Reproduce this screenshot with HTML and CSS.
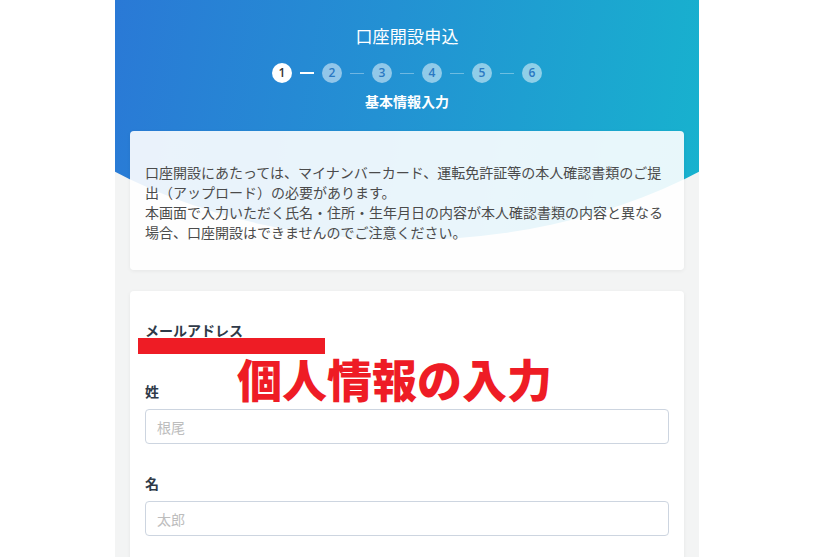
FILE: index.html
```html
<!DOCTYPE html>
<html lang="ja">
<head>
<meta charset="utf-8">
<title>口座開設申込</title>
<link rel="stylesheet" href="styles.css">
</head>
<body>
<div class="page">
  <header class="hero">
    <h1 class="title">口座開設申込</h1>
    <ol class="steps">
      <li class="step active">1</li>
      <li class="bar active"></li>
      <li class="step">2</li>
      <li class="bar"></li>
      <li class="step">3</li>
      <li class="bar"></li>
      <li class="step">4</li>
      <li class="bar"></li>
      <li class="step">5</li>
      <li class="bar"></li>
      <li class="step">6</li>
    </ol>
    <p class="step-name">基本情報入力</p>
  </header>

  <section class="card notice">
    <p>口座開設にあたっては、マイナンバーカード、運転免許証等の本人確認書類のご提出（アップロード）の必要があります。<br>本画面で入力いただく氏名・住所・生年月日の内容が本人確認書類の内容と異なる場合、口座開設はできませんのでご注意ください。</p>
  </section>

  <section class="card form">
    <div class="field email">
      <div class="label">メールアドレス</div>
      <div class="value"><span class="redact"></span></div>
    </div>
    <div class="field">
      <label class="label" for="sei">姓</label>
      <input class="input" id="sei" type="text" placeholder="根尾">
    </div>
    <div class="field">
      <label class="label" for="mei">名</label>
      <input class="input" id="mei" type="text" placeholder="太郎">
    </div>
    <div class="annotation">個人情報の入力</div>
  </section>
</div>
</body>
</html>
```

FILE: styles.css
```css
* { box-sizing: border-box; }
html, body { margin: 0; padding: 0; }
body {
  background: #ffffff;
  font-family: "Noto Sans CJK JP", "Noto Sans", sans-serif;
  height: 557px;
  overflow: hidden;
}
.page {
  position: relative;
  width: 584px;
  margin-left: 115px;
  min-height: 557px;
  background: #f3f4f4;
  padding: 0 15px 40px;
}
.page::before {
  content: "";
  position: absolute;
  left: 0;
  right: 0;
  top: 0;
  height: 240px;
  background: linear-gradient(100deg, #2a79d6 0%, #2391d3 45%, #17b3ce 100%);
  clip-path: ellipse(500px 362px at 50% -122px);
  z-index: 0;
}
.hero {
  position: relative;
  z-index: 1;
  padding-top: 24px;
  text-align: center;
  color: #fff;
  height: 131px;
}
.title {
  margin: 0;
  font-size: 17px;
  font-weight: 400;
  line-height: 24px;
  letter-spacing: 0.2px;
}
.steps {
  list-style: none;
  margin: 15px 0 0;
  padding: 0;
  display: flex;
  justify-content: center;
  align-items: center;
  gap: 8px;
}
.step {
  width: 20px;
  height: 20px;
  border-radius: 50%;
  background: rgba(255, 255, 255, 0.5);
  color: #2a78c2;
  font-family: "Open Sans", "Liberation Sans", sans-serif;
  font-size: 12px;
  font-weight: 600;
  line-height: 20px;
  text-align: center;
}
.step.active {
  background: #fff;
  color: #333;
}
.bar {
  width: 14px;
  height: 1px;
  background: rgba(255, 255, 255, 0.35);
}
.bar.active {
  height: 2px;
  background: #fff;
}
.step-name {
  margin: 9px 0 0;
  font-size: 14px;
  font-weight: 700;
  line-height: 18px;
}
.card {
  position: relative;
  z-index: 1;
  background: rgba(255, 255, 255, 0.9);
  border-radius: 4px;
  box-shadow: 0 1px 4px rgba(0, 0, 0, 0.06);
}
.notice {
  padding: 31px 15px 28px;
  color: #4b4b4b;
  font-size: 14px;
  line-height: 20px;
}
.notice p { margin: 0; }
.form {
  margin-top: 21px;
  padding: 29px 15px 30px;
  background: #fff;
}
.field { margin-bottom: 29px; }
.field.email { margin-bottom: 21px; }
.label {
  display: block;
  font-size: 14px;
  font-weight: 700;
  line-height: 20px;
  color: #2f3a48;
}
.value {
  height: 20px;
  position: relative;
}
.redact {
  position: absolute;
  left: -7px;
  top: -2px;
  width: 187px;
  height: 16px;
  background: #ee1c25;
}
.input {
  display: block;
  width: 100%;
  height: 35px;
  margin-top: 8px;
  padding: 0 11px;
  border: 1px solid #cdd5e0;
  border-radius: 4px;
  background: #fff;
  font-family: "Noto Sans CJK JP", sans-serif;
  font-size: 14px;
  color: #333;
}
.input::placeholder { color: #bdbdbd; }
.annotation {
  position: absolute;
  left: 107px;
  top: 58px;
  color: #ee1c25;
  font-size: 45px;
  font-weight: 900;
  line-height: 60px;
  white-space: nowrap;
}
```
